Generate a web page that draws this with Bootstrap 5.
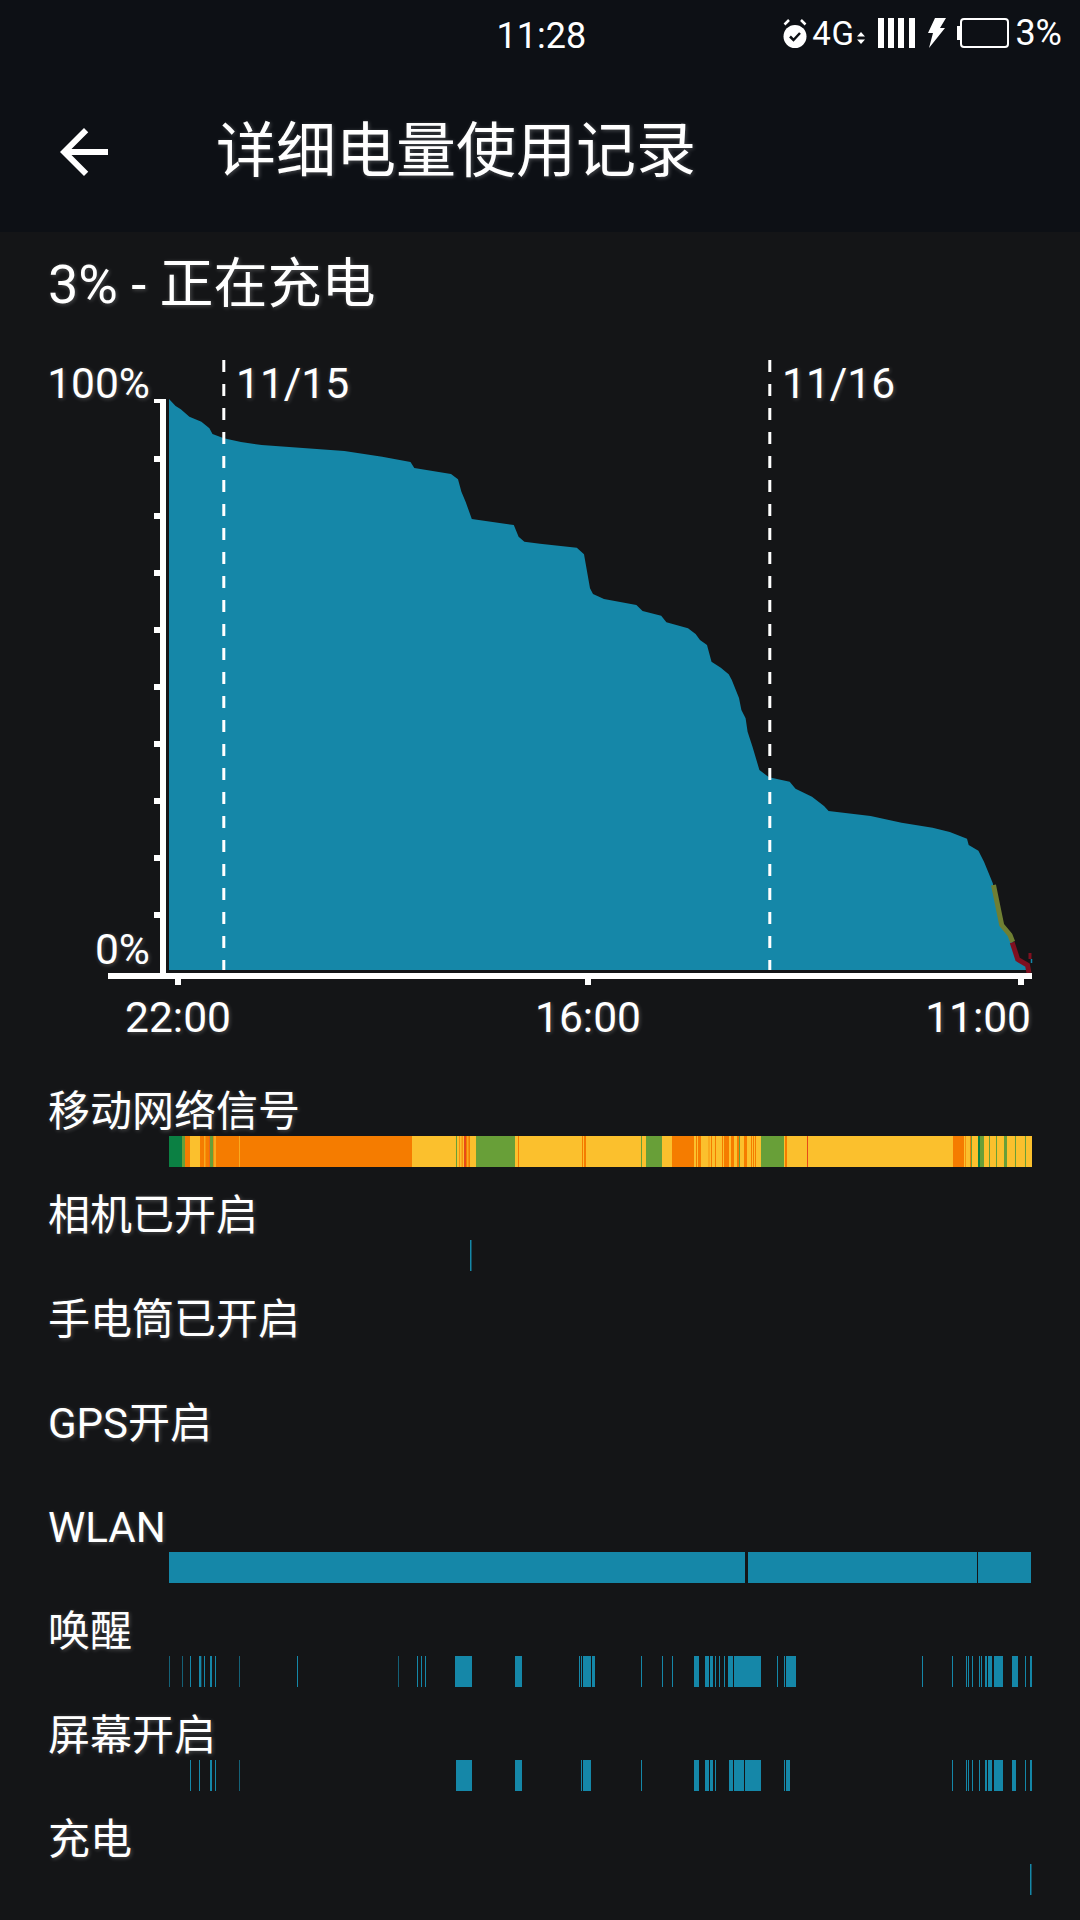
<!DOCTYPE html>
<html lang="zh-CN">
<head>
<meta charset="utf-8">
<title>详细电量使用记录</title>
<link rel="stylesheet" href="https://cdn.jsdelivr.net/npm/bootstrap@5.3.0/dist/css/bootstrap.min.css">
<style>
html, body { background: #141517; }
body {
  width: 1080px; height: 1920px; overflow: hidden; color: #fff;
  font-family: Roboto, "Noto Sans CJK SC", sans-serif;
  text-shadow: 1px 1px 4px rgba(255,255,255,.26);
}
.top-shell { background: #0d1015; }
.status-row { height: 72px; }
.status-clock { width: 87px; font-size: 36px; line-height: 72px; text-align: center; text-shadow: none; }
.status-side { flex: 1 1 0; padding-right: 18px; }
.status-icons { margin-bottom: 6px; }
.status-4g { font-size: 33px; line-height: 1; margin-left: 5px; letter-spacing: .5px; text-shadow: none; }
.status-arrows { margin: 10px 0 0 3px; }
.status-bars, .status-flash { margin-left: 13px; }
.status-batt { margin-left: 10px; }
.status-pct { font-size: 36px; line-height: 1; margin-left: 6px; text-shadow: none; }
.tool-row { height: 160px; padding-left: 48px; }
.back-ic { width: 72px; height: 72px; fill: #fff; display: block; }
.page-title { font-size: 60px; line-height: 1; margin: 0 0 0 96px; font-weight: 400; }
.charge-line { font-size: 54px; line-height: 60px; padding: 23px 0 0 48px; height: 108px; margin: 0; }
.chart-box { display: block; width: 1080px; height: 723px; }
.chart-box text { font-family: Roboto, sans-serif; font-size: 42.500px; fill: #fff; }
.track-row { height: 104px; padding-top: 25px; }
.track-name { font-size: 42px; line-height: 48px; padding-left: 48px; white-space: nowrap; }
.track-svg { display: block; width: 863px; height: 31px; margin-left: 169px; }
.blue { fill: #1587a8; }
.c-y { fill: #fbc02d; } .c-o { fill: #f57c00; } .c-g { fill: #689f38; } .c-d { fill: #0b8043; } .c-r { fill: #e64a19; }
</style>
</head>
<body>
<header class="top-shell">
  <div class="status-row d-flex align-items-center">
    <div class="status-side"></div>
    <div class="status-clock">11:28</div>
    <div class="status-side status-icons d-flex align-items-center justify-content-end">
      <svg width="24" height="30" viewBox="0 0 24 30" aria-hidden="true">
        <path d="M1.500 6.500 6 2M22.500 6.500 18 2" stroke="#fff" stroke-width="2.500" fill="none"/>
        <circle cx="12" cy="18.500" r="11.500" fill="#fff"/>
        <path d="M7 18.500l3.500 3.500 6.500-7" stroke="#0d1015" stroke-width="2.500" fill="none"/>
      </svg>
      <span class="status-4g">4G</span>
      <svg class="status-arrows" width="8" height="12" viewBox="0 0 8 12" aria-hidden="true"><path d="M4 0 8 4.500H0zM0 7.500h8L4 12z" fill="#fff"/></svg>
      <svg class="status-bars" width="37" height="30" viewBox="0 0 37 30" aria-hidden="true"><path d="M0 0h6v30H0zM10 0h6v30h-6zM20 0h6v30h-6zM31 0h6v30h-6z" fill="#fff"/></svg>
      <svg class="status-flash" width="18" height="30" viewBox="0 0 18 30" aria-hidden="true"><path d="M7 0h11l-6 10h5L1 30l4-15H0z" fill="#fff"/></svg>
      <svg class="status-batt" width="53" height="30" viewBox="0 0 53 30" aria-hidden="true"><path d="M4 8H1v14h3z" fill="#fff"/><rect x="5" y="1" width="47" height="28" rx="3" fill="none" stroke="#fff" stroke-width="2"/></svg>
      <span class="status-pct">3%</span>
    </div>
  </div>
  <div class="tool-row d-flex align-items-center">
    <svg class="back-ic flex-shrink-0" viewBox="0 0 24 24" aria-hidden="true"><path d="M20 11H7.830l5.590-5.590L12 4l-8 8 8 8 1.410-1.410L7.830 13H20v-2z"/></svg>
    <h1 class="page-title">详细电量使用记录</h1>
  </div>
</header>

<p class="charge-line">3% - 正在充电</p>

<svg class="chart-box" viewBox="0 340 1080 723" role="img" aria-label="电量图表">
  <path class="blue" d="M169 399 175.600 406 180.800 409.300 189.400 416.700 201.400 421.700 209.400 428.300 212.500 434 223.800 438.300 241 442 261.700 445 344.400 451 382.200 456.700 410.500 462 414.300 468 451 474 458 479.300 461.400 491.700 465.600 501.700 471.800 519 513.800 525 518.600 536.700 524.400 541.700 540 543.700 576.800 547.700 584 554.300 590 588.300 593 594 604 599 636.400 605 642.600 611 661.200 615.700 666.400 622.300 688 628.300 695.600 634 700 640 707 645 711.500 661.700 720.800 667.700 728.700 674.300 731.800 680 739 698 741.400 710 745.600 718.300 747.600 731.700 752.500 746.700 759.400 770 769 777.300 789.700 781.700 795.500 788.700 812 796.700 824 806 828.600 811 870.600 816 901.600 822.700 932.600 827.700 949.800 832 967 838.700 968.700 845 978.400 850.700 984 861.700 992.800 883.300 998 906.700 1002 924.300 1008.300 931.700 1012.400 941.700 1017 958.300 1027 965 1030 970H169z"/>
  <path d="M993.500 885 1001.700 925 1010 935 1012.700 942" fill="none" stroke="#6f7f33" stroke-width="5"/>
  <path d="M1012.200 942.500 1017.700 959.300 1027.500 965 1029 973" fill="none" stroke="#7f1020" stroke-width="5"/>
  <path d="M1030 953v6" stroke="#7f1020" stroke-width="3"/>
  <path d="M1031.500 959v4" stroke="#1587a8" stroke-width="1.500"/>
  <path d="M223.800 360V970M769.800 360V970" stroke="#fff" stroke-width="3" stroke-dasharray="12 12"/>
  <path fill="#fff" d="M160 399h6v580h-6zM108 973h924v6H108zM154 399h6v4h-6zM154 456h6v6h-6zM154 513h6v6h-6zM154 570h6v6h-6zM154 627h6v6h-6zM154 684h6v6h-6zM154 741h6v6h-6zM154 798h6v6h-6zM154 855h6v6h-6zM154 912h6v6h-6zM175 979h6v6h-6zM585 979h6v6h-6zM1018 979h6v6h-6z"/>
  <text x="150" y="398" text-anchor="end">100%</text>
  <text x="150" y="964" text-anchor="end">0%</text>
  <text x="236" y="398">11/15</text>
  <text x="782" y="398">11/16</text>
  <text x="178" y="1032" text-anchor="middle">22:00</text>
  <text x="588" y="1032" text-anchor="middle">16:00</text>
  <text x="1031" y="1032" text-anchor="end">11:00</text>
</svg>

<section>
  <div class="track-row">
    <div class="track-name">移动网络信号</div>
    <svg class="track-svg" viewBox="0 0 863 31" aria-hidden="true">
      <rect class="c-y" width="863" height="31"/>
      <g transform="translate(-9 0) scale(.33333 1)">
        <path class="c-d" d="M27 0H66V31H27z"/>
        <path class="c-g" d="M66 0H75V31H66zM150 0H160V31H150zM888 0H891V31H888zM948 0H1065V31H948z"/>
        <path class="c-o" d="M75 0H90V31H75zM120 0H133V31H120zM136 0H148V31H136zM160 0H163V31H160zM167 0H238V31H167zM240 0H756V31H240zM897 0H899V31H897zM905 0H908V31H905zM918 0H922V31H918zM925 0H930V31H925zM1074 0H1077V31H1074zM1266 0H1269V31H1266zM1272 0H1278V31H1272z"/>
        <path class="c-r" d="M148 0H150V31H148zM912 0H918V31H912z"/>
      </g>
      <g transform="translate(451 0) scale(.33333 1)">
        <path class="c-g" d="M63 0H66V31H63zM78 0H126V31H78zM357 0H360V31H357zM423 0H492V31H423zM1053 0H1056V31H1053zM1080 0H1092V31H1080zM1107 0H1110V31H1107zM1128 0H1131V31H1128zM1152 0H1161V31H1152zM1185 0H1188V31H1185zM1215 0H1218V31H1215z"/>
        <path class="c-o" d="M156 0H222V31H156zM228 0H231V31H228zM234 0H243V31H234zM266 0H268V31H266zM273 0H276V31H273zM285 0H288V31H285zM306 0H309V31H306zM312 0H327V31H312zM333 0H342V31H333zM351 0H357V31H351zM372 0H381V31H372zM393 0H396V31H393zM399 0H402V31H399zM405 0H408V31H405zM495 0H501V31H495zM999 0H1032V31H999zM1036 0H1038V31H1036zM1050 0H1053V31H1050z"/>
        <path class="c-r" d="M561 0H564V31H561z"/>
        <path class="c-d" d="M1074 0H1080V31H1074z"/>
      </g>
    </svg>
  </div>
  <div class="track-row">
    <div class="track-name">相机已开启</div>
    <svg class="track-svg" viewBox="0 0 863 31" aria-hidden="true"><rect class="blue" x="301" width="1.500" height="31"/></svg>
  </div>
  <div class="track-row">
    <div class="track-name">手电筒已开启</div>
    <div class="track-svg"></div>
  </div>
  <div class="track-row">
    <div class="track-name">GPS开启</div>
    <div class="track-svg"></div>
  </div>
  <div class="track-row">
    <div class="track-name">WLAN</div>
    <svg class="track-svg" viewBox="0 0 863 31" aria-hidden="true"><path class="blue" d="M0 0H576V31H0zM579 0H808V31H579zM809 0H862V31H809z"/></svg>
  </div>
  <div class="track-row">
    <div class="track-name">唤醒</div>
    <svg class="track-svg" viewBox="0 0 863 31" aria-hidden="true">
      <g class="blue" transform="translate(-9 0) scale(.33333 1)"><path d="M28 0H30V31H28zM67 0H69V31H67zM90 0H93V31H90zM117 0H124V31H117zM132 0H135V31H132zM150 0H156V31H150zM165 0H168V31H165zM238 0H240V31H238zM411 0H414V31H411zM715 0H717V31H715zM771 0H774V31H771zM783 0H786V31H783zM795 0H798V31H795zM885 0H936V31H885zM1065 0H1086V31H1065zM1257 0H1260V31H1257zM1263 0H1266V31H1263zM1269 0H1293V31H1269zM1296 0H1305V31H1296z"/></g>
      <g class="blue" transform="translate(451 0) scale(.33333 1)"><path d="M63 0H66V31H63zM126 0H129V31H126zM156 0H159V31H156zM222 0H237V31H222zM255 0H267V31H255zM270 0H279V31H270zM285 0H288V31H285zM297 0H300V31H297zM312 0H315V31H312zM324 0H339V31H324zM342 0H423V31H342zM471 0H474V31H471zM492 0H495V31H492zM498 0H528V31H498zM906 0H909V31H906zM996 0H999V31H996zM1038 0H1041V31H1038zM1044 0H1047V31H1044zM1056 0H1059V31H1056zM1077 0H1080V31H1077zM1083 0H1086V31H1083zM1095 0H1101V31H1095zM1104 0H1116V31H1104zM1122 0H1149V31H1122zM1176 0H1194V31H1176zM1215 0H1218V31H1215zM1230 0H1236V31H1230z"/></g>
    </svg>
  </div>
  <div class="track-row">
    <div class="track-name">屏幕开启</div>
    <svg class="track-svg" viewBox="0 0 863 31" aria-hidden="true">
      <g class="blue" transform="translate(-9 0) scale(.33333 1)"><path d="M90 0H93V31H90zM117 0H120V31H117zM150 0H156V31H150zM165 0H168V31H165zM238 0H240V31H238zM888 0H936V31H888zM1065 0H1086V31H1065zM1263 0H1266V31H1263zM1269 0H1293V31H1269z"/></g>
      <g class="blue" transform="translate(451 0) scale(.33333 1)"><path d="M63 0H66V31H63zM222 0H237V31H222zM255 0H267V31H255zM270 0H279V31H270zM285 0H288V31H285zM327 0H339V31H327zM342 0H372V31H342zM375 0H423V31H375zM492 0H495V31H492zM498 0H510V31H498zM996 0H999V31H996zM1038 0H1041V31H1038zM1044 0H1047V31H1044zM1056 0H1059V31H1056zM1077 0H1080V31H1077zM1095 0H1101V31H1095zM1104 0H1116V31H1104zM1122 0H1149V31H1122zM1176 0H1188V31H1176zM1215 0H1218V31H1215zM1230 0H1236V31H1230z"/></g>
    </svg>
  </div>
  <div class="track-row">
    <div class="track-name">充电</div>
    <svg class="track-svg" viewBox="0 0 863 31" aria-hidden="true"><rect class="blue" x="861" width="1.500" height="31"/></svg>
  </div>
</section>
<script src="https://cdn.jsdelivr.net/npm/bootstrap@5.3.0/dist/js/bootstrap.bundle.min.js"></script>
</body>
</html>
